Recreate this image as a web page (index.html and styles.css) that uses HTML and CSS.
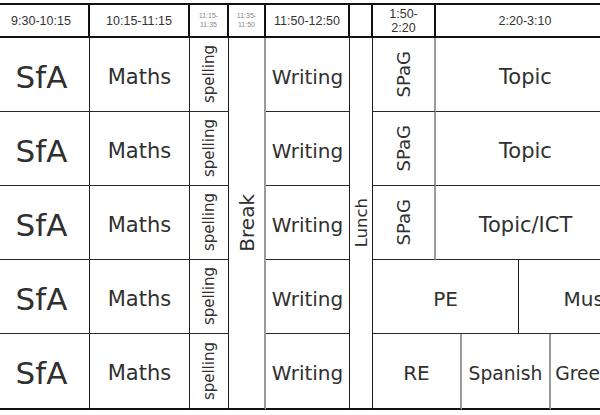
FILE: index.html
```html
<!DOCTYPE html>
<html>
<head>
<meta charset="utf-8">
<link rel="stylesheet" href="styles.css">
</head>
<body>
<div class="page">
  <div class="tt">
    <div class="c h">9:30-10:15</div>
    <div class="c h">10:15-11:15</div>
    <div class="c h tiny">11:15-<br>11:35</div>
    <div class="c h tiny">11:35-<br>11:50</div>
    <div class="c h">11:50-12:50</div>
    <div class="c h"></div>
    <div class="c h two">1:50-<br>2:20</div>
    <div class="c h s4">2:20-3:10</div>
    <div class="c h"></div>

    <div class="c b sfa">SfA</div>
    <div class="c b maths">Maths</div>
    <div class="c"><span class="vert spell">spelling</span></div>
    <div class="c r5 gray last"><span class="vert brk">Break</span></div>
    <div class="c b wri">Writing</div>
    <div class="c r5 last"><span class="vert lunch">Lunch</span></div>
    <div class="c gray"><span class="vert spag">SPaG</span></div>
    <div class="c b s4 topic">Topic</div>
    <div class="c"></div>

    <div class="c b sfa">SfA</div>
    <div class="c b maths">Maths</div>
    <div class="c"><span class="vert spell">spelling</span></div>
    <div class="c b wri">Writing</div>
    <div class="c gray"><span class="vert spag">SPaG</span></div>
    <div class="c b s4 topic">Topic</div>
    <div class="c"></div>

    <div class="c b sfa">SfA</div>
    <div class="c b maths">Maths</div>
    <div class="c"><span class="vert spell">spelling</span></div>
    <div class="c b wri">Writing</div>
    <div class="c gray"><span class="vert spag">SPaG</span></div>
    <div class="c b s4 topic">Topic/ICT</div>
    <div class="c"></div>

    <div class="c b sfa">SfA</div>
    <div class="c b maths">Maths</div>
    <div class="c"><span class="vert spell">spelling</span></div>
    <div class="c b wri">Writing</div>
    <div class="c b s3 subj">PE</div>
    <div class="c b s3 subj">Music</div>

    <div class="c b sfa last">SfA</div>
    <div class="c b maths last">Maths</div>
    <div class="c last"><span class="vert spell">spelling</span></div>
    <div class="c b wri last">Writing</div>
    <div class="c b s2 subj gray last">RE</div>
    <div class="c b s2 sp gray last">Spanish</div>
    <div class="c b sp last">Greek</div>
    <div class="c last"></div>
  </div>
</div>
</body>
</html>
```
FILE: styles.css
```css
body {
  margin: 0;
  background: #fff;
  overflow: hidden;
  font-family: "DejaVu Sans", sans-serif;
  color: #303030;
}

.page {
  width: 600px;
  height: 415px;
  overflow: hidden;
  padding-top: 3px;
  box-sizing: border-box;
}

.tt {
  display: grid;
  margin-left: -6px;
  width: 672px;
  grid-template-columns: 96px 100px 39px 37px 84px 23px 63px 26px 57px 32px 65px 50px;
  grid-template-rows: 33px 74px 74px 74px 74px 76px;
  border-top: 2px solid #111;
}

.c {
  display: flex;
  align-items: center;
  justify-content: center;
  text-align: center;
  box-sizing: border-box;
  border-right: 1px solid #1e1e1e;
  border-bottom: 1px solid #2a2a2a;
  white-space: nowrap;
}

.b {
  padding-top: 4px;
}

.h {
  font-family: "Liberation Sans", sans-serif;
  font-size: 12.5px;
  color: #333;
  border-right: 2px solid #111;
  border-bottom: 2px solid #111;
}

.tiny {
  font-size: 7px;
  line-height: 8.5px;
  color: #888;
}

.two {
  line-height: 14px;
}

.s2 { grid-column: span 2; }
.s3 { grid-column: span 3; }
.s4 { grid-column: span 4; }
.r5 { grid-row: span 5; }

.gray { border-right: 2px solid #9a9a9a; }
.last { border-bottom: 2px solid #111; }

.vert {
  writing-mode: vertical-rl;
  transform: rotate(180deg);
}

.sfa { font-size: 31px; }
.maths { font-size: 21px; }
.wri { font-size: 20px; }
.spell { font-size: 15px; }
.brk { font-size: 20px; }
.lunch { font-size: 16.5px; }
.spag { font-size: 18px; }
.topic { font-size: 21px; }
.subj { font-size: 20px; }
.sp { font-size: 18.7px; }
```
